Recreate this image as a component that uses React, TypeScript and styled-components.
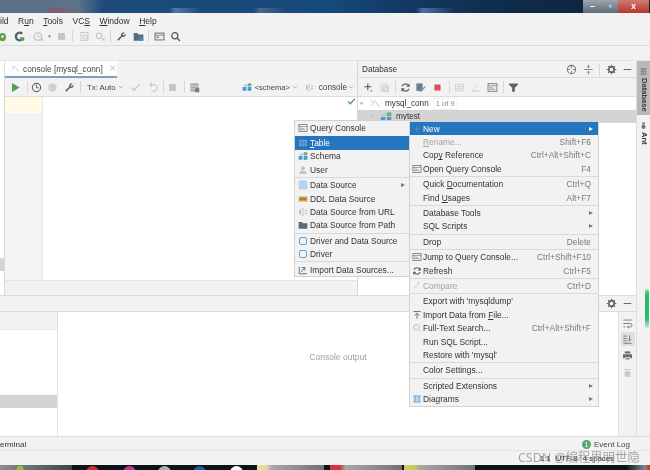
import React from 'react';
import styled, { createGlobalStyle } from 'styled-components';

const Global = createGlobalStyle`
  html, body { margin: 0; padding: 0; background: #f2f2f2; }
  body { font-family: "Liberation Sans", Arial, sans-serif; }
  u { text-underline-offset: 1px; text-decoration-thickness: 0.5px; }
  svg { flex: none; }
`;

const Screen = styled.div`
  position: relative; width: 650px; height: 470px; overflow: hidden;
  display: flex; flex-direction: column; background: #f2f2f2; color: #333;
  font-size: 8.4px; filter: blur(0.38px);
`;
const TitleStrip = styled.div`
  height: 13px; flex: none; display: flex; justify-content: flex-end; padding-right: 1px;
  background:
    linear-gradient(90deg, transparent 7%, rgba(170,60,70,.5) 8%, transparent 12%, transparent 26%, rgba(120,160,210,.55) 27%, transparent 31%, transparent 39%, rgba(130,130,150,.5) 40%, transparent 44%, transparent 64%, rgba(120,150,210,.6) 65%, transparent 70%) bottom / 100% 5px no-repeat,
    linear-gradient(90deg, #5b7088 0, #5d7389 12%, #1d4a78 16%, #174a7c 50%, #123a62 62%, #0f2a48 80%, #10233a 100%);
`;
const WinButton = styled.div<{ $w: number; $close?: boolean }>`
  width: ${p => p.$w}px; height: 13px; display: flex; align-items: center; justify-content: center;
  color: #fff; font-size: 9px; font-weight: 700; line-height: 1;
  background: ${p => p.$close ? 'linear-gradient(#cf7a70,#b8352c)' : 'linear-gradient(#9aa5ae,#5f6b76)'};
`;
const MenuBar = styled.div`
  height: 16px; flex: none; display: flex; align-items: center; font-size: 8.5px; color: #2f2f2f;
  span { margin-right: 9.5px; white-space: nowrap; }
`;
const ToolRow = styled.div<{ $h: number; $line?: boolean }>`
  height: ${p => p.$h}px; flex: none; display: flex; align-items: center; box-sizing: border-box;
  border-bottom: ${p => p.$line ? '1px solid #dcdcdc' : '0'};
`;
const MainTools = styled(ToolRow)`
  padding-bottom: 2px;
`;
const Slot = styled.div<{ $w?: number }>`
  width: ${p => p.$w ?? 16}px; flex: none; height: 100%; display: flex; align-items: center; justify-content: center;
`;
const Divider = styled.div<{ $mx?: number }>`
  width: 1px; height: 12px; flex: none; background: #d6d6d6; margin: 0 ${p => p.$mx ?? 2}px;
`;
const NavStrip = styled.div`
  height: 14px; flex: none;
`;
const Middle = styled.div`
  height: 377px; flex: none; display: flex; box-sizing: border-box; border-top: 1px solid #e4e4e4;
  border-bottom: 1px solid #dcdcdc;
`;
const Center = styled.div`
  width: 636px; flex: none; display: flex; flex-direction: column;
`;
const UpperSplit = styled.div`
  height: 234px; flex: none; display: flex; box-sizing: border-box;
`;
const EdgeStripe = styled.div`
  width: 5px; flex: none; background: #fff; box-sizing: border-box; border-right: 1px solid #dcdcdc;
  padding-top: 197px;
`;
const EdgeMark = styled.div`
  height: 13px; background: #d4d4d4;
`;
const EditorPane = styled.div`
  width: 352px; flex: none; display: flex; flex-direction: column;
`;
const TabRow = styled.div`
  height: 17px; flex: none; display: flex;
`;
const Tab = styled.div`
  width: 112px; background: #fff; display: flex; align-items: center; box-sizing: border-box;
  border-bottom: 2px solid #7b9cc4; padding-left: 5px; gap: 3px; font-size: 8.3px; color: #444; white-space: nowrap;
`;
const TabClose = styled.span`
  margin-left: 4px; color: #bdbdbd; font-size: 10px; line-height: 1;
`;
const Label = styled.span<{ $ml?: number; $fs: number }>`
  margin-left: ${p => p.$ml ?? 0}px; color: #444; white-space: nowrap; font-size: ${p => p.$fs}px;
`;
const Spacer = styled.div`
  flex: 1;
`;
const EditorBody = styled.div`
  flex: 1; display: flex; background: #fff; min-height: 0;
`;
const Gutter = styled.div`
  width: 38px; flex: none; background: #f3f3f3; box-sizing: border-box; border-right: 1px solid #e6e6e6;
`;
const CurrentLine = styled.div`
  height: 16px; background: #fffbe6;
`;
const EditorText = styled.div`
  flex: 1; display: flex; justify-content: flex-end; align-items: flex-start; padding: 0 1px 0 0;
`;
const EditorFoot = styled.div`
  height: 15px; flex: none; background: #f2f2f2; box-sizing: border-box; border-top: 1px solid #e4e4e4;
`;
const DbPane = styled.div`
  flex: 1; display: flex; flex-direction: column; background: #fff; box-sizing: border-box; border-left: 1px solid #d6d6d6;
`;
const PaneHead = styled(ToolRow)`
  background: #f2f2f2; font-size: 8.2px; padding: 1px 0 0 4px;
`;
const PaneTools = styled(ToolRow)`
  background: #f2f2f2; padding-left: 3px;
`;
const TreeRow = styled.div<{ $sel?: boolean; $indent: number }>`
  height: 13px; flex: none; display: flex; align-items: center; padding-left: ${p => p.$indent}px; gap: 4px;
  background: ${p => p.$sel ? '#d4d4d4' : 'transparent'}; font-size: 8.2px; color: #333;
`;
const Count = styled.span`
  padding: 0 2px; border: 1px solid #eeeeee; font-size: 7.6px; color: #888; line-height: 10px;
`;
const ConsoleHead = styled(ToolRow)`
  justify-content: flex-end; padding-right: 1px; border-top: 1px solid #dcdcdc; border-bottom: 1px solid #dcdcdc;
`;
const Lower = styled.div`
  flex: 1; display: flex; min-height: 0;
`;
const Sessions = styled.div`
  width: 58px; flex: none; display: flex; flex-direction: column; background: #fff; box-sizing: border-box;
  border-right: 1px solid #e0e0e0;
`;
const SessionHead = styled.div`
  height: 18px; flex: none; background: #f2f2f2; box-sizing: border-box; border-bottom: 1px solid #e6e6e6;
`;
const SessionSel = styled.div`
  height: 13px; flex: none; margin-top: 65px; background: #d4d4d4;
`;
const ConsoleOut = styled.div`
  flex: 1; display: flex; align-items: center; justify-content: center; background: #fff;
  color: #a0a0a0; font-size: 8.5px; padding-bottom: 35px;
`;
const SideTools = styled.div`
  width: 18px; flex: none; background: #f2f2f2; box-sizing: border-box; border-left: 1px solid #e0e0e0;
  display: flex; flex-direction: column; align-items: center; padding-top: 4px;
`;
const SideTool = styled.div<{ $on?: boolean }>`
  width: 14px; height: 14px; margin-bottom: 2.4px; display: flex; align-items: center; justify-content: center;
  border-radius: 1px; background: ${p => p.$on ? '#dfdfdf' : 'transparent'};
`;
const RightStripe = styled.div`
  flex: 1; display: flex; flex-direction: column; align-items: stretch; box-sizing: border-box; border-left: 1px solid #dedede;
`;
const StripeTab = styled.div<{ $on?: boolean; $h: number }>`
  height: ${p => p.$h}px; display: flex; flex-direction: column; align-items: center; padding-top: 6px; gap: 2px;
  box-sizing: border-box; background: ${p => p.$on ? '#b9b9b9' : 'transparent'};
`;
const Vertical = styled.span`
  writing-mode: vertical-rl; font-size: 7.6px; font-weight: 700; color: #3a3a3a; line-height: 10px;
`;
const GreenBar = styled.div`
  position: absolute; left: 645px; top: 289px; width: 4px; height: 39px; border-radius: 2px;
  background: linear-gradient(#9fdcb8, #27bb6c 15%, #27bb6c 75%, #bfead0);
`;
const StripeBar = styled(ToolRow)`
  justify-content: space-between; font-size: 8px; padding: 2px 20px 0 0; border-bottom: 1px solid #e4e4e4;
`;
const Terminal = styled.span`
  color: #333;
`;
const EventLog = styled.span`
  display: flex; align-items: center; gap: 3px; color: #444;
`;
const EventDot = styled.span`
  width: 9px; height: 9px; border-radius: 50%; background: #57a86f; color: #fff; font-size: 7px; line-height: 9px; text-align: center;
`;
const StatusBar = styled(ToolRow)`
  justify-content: flex-end; padding-right: 36px; gap: 5px; font-size: 7.8px; color: #333;
`;
const Taskbar = styled.div`
  flex: 1; background: #0d1118; display: flex; align-items: flex-start; overflow: hidden;
`;
const TaskStart = styled.div`
  width: 72px; height: 6px; flex: none;
  background: radial-gradient(circle at 20px 4px, #8fc04f 0 3px, transparent 4px), linear-gradient(90deg,#8b8f8d,#3d4446);
`;
const TaskDot = styled.div<{ $c: string; $ml: number }>`
  width: 13px; height: 13px; flex: none; border-radius: 50%; background: ${p => p.$c}; margin: 1px 0 0 ${p => p.$ml}px;
`;
const TaskItem = styled.div<{ $w: number; $ml: number; $c: string }>`
  width: ${p => p.$w}px; height: 6px; flex: none; margin-left: ${p => p.$ml}px;
  background: linear-gradient(90deg, ${p => p.$c} 0, ${p => p.$c} 14%, #a5aaa7 22%, #6e7371 100%);
`;
const Tray = styled.div`
  margin-left: auto; width: 24px; height: 6px; background: linear-gradient(90deg,#0d1118,#7d8b92 80%,#c33 95%);
`;
const Watermark = styled.div`
  position: absolute; left: 518px; top: 450px; font-size: 12.4px; color: rgba(120,120,120,.62); white-space: nowrap; line-height: 16px;
  font-family: "Noto Sans", "Noto Sans CJK SC", sans-serif;
`;
const PopMenu = styled.div<{ $x: number; $y: number; $w: number }>`
  position: absolute; left: ${p => p.$x}px; top: ${p => p.$y}px; width: ${p => p.$w}px; box-sizing: border-box;
  display: flex; flex-direction: column; background: #f2f2f2; box-shadow: 0 0 0 1px #d2d2d2;
  font-size: 8.4px; color: #333;
`;
const MenuRow = styled.div<{ $active?: boolean; $off?: boolean; $h: number }>`
  height: ${p => p.$h}px; flex: none; display: flex; align-items: center; white-space: nowrap; box-sizing: border-box;
  padding-right: 7px;
  background: ${p => p.$active ? '#2675bf' : 'transparent'};
  color: ${p => p.$active ? '#fff' : p.$off ? '#a3a3a3' : '#333'};
`;
const MenuIcon = styled.span<{ $w: number }>`
  width: ${p => p.$w}px; flex: none; display: flex; align-items: center; justify-content: center;
`;
const Shortcut = styled.span`
  margin-left: auto; color: #7a7a7a; font-size: 8.4px;
`;
const SubArrow = styled.span<{ $light?: boolean }>`
  margin-left: auto; margin-right: -2px; width: 0; height: 0; border-left: 4px solid ${p => p.$light ? '#fff' : '#777'};
  border-top: 2.5px solid transparent; border-bottom: 2.5px solid transparent;
`;
const MenuSep = styled.div<{ $clear?: boolean }>`
  height: 1px; flex: none; margin: 0.5px 0; background: ${p => p.$clear ? 'transparent' : '#d9d9d9'};
`;

const paths: Record<string, React.ReactNode> = {
  play: <path d="M3 1.5 14 8 3 14.5z" fill="#4c9e58" />,
  bug: <><ellipse cx="8" cy="9" rx="5" ry="6" fill="#5f9e4f" /><circle cx="8" cy="8" r="2" fill="#e8f0dc" /></>,
  cover: <><path d="M12 4a5.5 5.5 0 1 0 0 8" stroke="#55626c" strokeWidth="3.4" fill="none" /><path d="M9 9h6v5H9z" fill="#4fa04f" /></>,
  profile: <><circle cx="7" cy="8" r="5.5" stroke="#b8b8b8" strokeWidth="1.6" fill="none" /><path d="M7 5v3h3" stroke="#b8b8b8" fill="none" /><path d="M10 10h5v4h-5z" fill="#c8d8c8" /></>,
  drop: <path d="M5 6h6l-3 4z" fill="#777" />,
  dropLine: <path d="m4 6 4 4 4-4" stroke="#999" strokeWidth="1.300" fill="none" />,
  stopg: <rect x="3" y="3" width="10" height="10" fill="#c4c4c4" />,
  stopr: <rect x="2.5" y="2.5" width="11" height="11" rx="1" fill="#dc4f5c" />,
  docq: <><rect x="3" y="2" width="10" height="12" fill="none" stroke="#bcbcbc" /><circle cx="9" cy="9" r="3" fill="none" stroke="#b0b0b0" /></>,
  docq2: <><circle cx="6" cy="7" r="4" fill="none" stroke="#b8b8b8" strokeWidth="1.4" /><path d="M10 10h4v4h-4z" fill="#cfcfcf" /></>,
  wrench: <path d="M14 3.5 11 6.5 9.500 5 12.500 2A4 4 0 0 0 7.500 7L2 12.500 3.500 14 9 8.500A4 4 0 0 0 14 3.500z" fill="#56606a" />,
  folder: <><path d="M1 3h5l2 2h7v9H1z" fill="#5d6b78" /><path d="M9 9h6v5H9z" fill="#3f8ed4" /></>,
  term: <><rect x="1.500" y="3" width="13" height="10" fill="none" stroke="#56606a" strokeWidth="1.300" /><path d="M1.500 6h13" stroke="#56606a" /><path d="M4 8h3v2H4z" fill="#56606a" /></>,
  search: <><circle cx="7" cy="7" r="4.500" fill="none" stroke="#505a64" strokeWidth="1.800" /><path d="m10.500 10.500 4 4" stroke="#505a64" strokeWidth="2" /></>,
  consoleTab: <><path d="M3 3l3 4-3 3" stroke="#8fb2cc" fill="none" /><path d="M7 3l7 9" stroke="#9fc0a8" /></>,
  clock: <><circle cx="8" cy="8" r="6" fill="none" stroke="#5a6570" strokeWidth="1.600" /><path d="M8 4v4.500h3.500" stroke="#5a6570" strokeWidth="1.400" fill="none" /></>,
  disc: <circle cx="8" cy="8" r="6" fill="#cfcfcf" />,
  checkg: <path d="m2 8 4 4 8-9" stroke="#c6c6c6" strokeWidth="1.800" fill="none" />,
  undo: <path d="M4 4h6a3.500 3.500 0 0 1 0 9H6M4 4l3-2.500M4 4l3 3" stroke="#c4c4c4" strokeWidth="1.500" fill="none" />,
  grid: <><rect x="2" y="2" width="12" height="12" fill="#a8a8a8" /><path d="M2 6h12M2 10h12" stroke="#eee" /><path d="M9 9h6v6H9z" fill="#7b7b7b" /></>,
  schema: <><path d="M1 8h6v6H1zM9 8h6v6H9z" fill="#4a9ad4" /><path d="M9 2h6v5H9z" fill="#6fb26f" /><path d="M3 4h5v3H3z" fill="#a8cce6" /></>,
  url: <path d="M2 4h3v8H2zM7 2h2v3H7zM7 7h2v2H7zM7 11h2v3H7zM11 5h3v2h-3zM11 9h3v2h-3z" fill="#aebfca" />,
  console: <path d="M2 4h3v8H2zM7 2h2v3H7zM7 7h2v2H7zM7 11h2v3H7zM11 5h3v2h-3zM11 9h3v2h-3z" fill="#a9b8c4" />,
  globe: <><circle cx="8" cy="8" r="6" fill="none" stroke="#707a84" strokeWidth="1.500" /><path d="M8 2v4M8 10v4M2 8h4M10 8h4" stroke="#707a84" strokeWidth="1.300" /></>,
  split: <path d="M2 8h12M8 1v4M8 15v-4M6 3.500 8 5.500 10 3.500M6 12.500l2-2 2 2" stroke="#707a84" strokeWidth="1.300" fill="none" />,
  gear: <><circle cx="8" cy="8" r="4" fill="none" stroke="#5f6a74" strokeWidth="2.600" /><path d="M8 1v3M8 12v3M1 8h3M12 8h3M3 3l2 2M11 11l2 2M13 3l-2 2M3 13l2-2" stroke="#5f6a74" strokeWidth="1.600" /></>,
  minus: <path d="M2.500 8h11" stroke="#5f6a74" strokeWidth="1.500" />,
  plus: <><path d="M7 2v10M2 7h10" stroke="#4d5862" strokeWidth="1.600" /><path d="M10.500 12.500h3l-1.500 2z" fill="#4d5862" /></>,
  copy: <><rect x="3" y="3" width="8" height="9" fill="none" stroke="#c4c4c4" /><rect x="6" y="6" width="8" height="8" fill="#e0e0e0" stroke="#c4c4c4" /></>,
  refresh: <><path d="M13 6A5.500 5.500 0 0 0 3 6M3 10a5.500 5.500 0 0 0 10 0" stroke="#56606a" strokeWidth="1.800" fill="none" /><path d="M14 2v5H9zM2 14V9h5z" fill="#56606a" /></>,
  editdb: <><rect x="2" y="2" width="9" height="11" fill="#727d88" /><path d="m7 13 7-7 1.500 1.500-7 7H7z" fill="#4e9fd6" /></>,
  tableg: <><rect x="2" y="3" width="12" height="10" fill="none" stroke="#c8c8c8" /><path d="M2 6.500h12M2 9.500h12M6 3v10M10 3v10" stroke="#d2d2d2" /></>,
  pencil: <path d="M2 13h12M4 11l7-7" stroke="#c4c4c4" strokeWidth="1.300" fill="none" />,
  ql: <><rect x="1.500" y="2.500" width="13" height="11" fill="none" stroke="#67717b" strokeWidth="1.200" /><path d="M1.500 5.500h13" stroke="#67717b" /><path d="M4 8h3v3H4zM9 8v3h3" fill="none" stroke="#67717b" strokeWidth=".8" /></>,
  filter: <path d="M1.500 2h13v2L10 8.500V14H6V8.500L1.500 4z" fill="#5b6670" />,
  checkOk: <path d="m2 8 4 4 8-9" stroke="#4ea34f" strokeWidth="2.400" fill="none" />,
  treeDown: <path d="M3 5h10l-5 7z" fill="#bcbcbc" />,
  treeRight: <path d="M5 3v10l7-5z" fill="#c4c4c4" />,
  dbIcon: <rect x="2" y="1.500" width="12" height="13" rx="1.500" fill="#b5d6f0" stroke="#9cc4e4" />,
  tableMenu: <><rect x="2" y="3" width="12" height="10" fill="#7fa9d0" /><path d="M2 6.500h12M2 9.500h12M6 3v10M10 3v10" stroke="#2675bf" /></>,
  user: <><circle cx="8" cy="5" r="3" fill="#bdbdbd" /><path d="M2 14c0-4 3-5 6-5s6 1 6 5z" fill="#bdbdbd" /></>,
  ddl: <><rect x="1" y="4" width="14" height="8" rx="1" fill="#d6a24e" /><path d="M3 7h10M3 9h10" stroke="#8a5a1c" strokeWidth=".9" /></>,
  pathf: <path d="M1 3h5l2 2h7v9H1z" fill="#5f6973" />,
  driver: <rect x="2.500" y="2.500" width="11" height="11" rx="2" fill="#eef6fc" stroke="#4f9fdd" strokeWidth="1.600" />,
  importd: <><path d="M2 3v11h12" stroke="#5f6973" strokeWidth="1.500" fill="none" /><path d="M5 11l6-7M11 9V4H6" stroke="#5f6973" strokeWidth="1.500" fill="none" /></>,
  compare: <path d="M3 12 8 7M8 3h2v2h2" stroke="#c4c4c4" strokeWidth="1.400" fill="none" />,
  importf: <path d="M2 2.500h12M8 14V6M4 9l4-4 4 4" stroke="#5f6973" strokeWidth="1.500" fill="none" />,
  fsearch: <><circle cx="7" cy="7" r="4.500" fill="none" stroke="#b4b4b4" strokeWidth="1.300" /><path d="m10.500 10.500 3.500 3.500" stroke="#b4b4b4" strokeWidth="1.300" /></>,
  diagram: <><rect x="2" y="3" width="12" height="10" fill="#b9d9ef" /><path d="M5 3v10M11 3v10M2 3h12M2 13h12" stroke="#4f8fc4" strokeWidth="1" /></>,
  newArrow: <path d="M8 3v10M3 8h10" stroke="#5a8fc4" strokeWidth="1.400" />,
  wrap: <path d="M2 3h12M2 8h10a2.500 2.500 0 0 1 0 5H8M2 13h3M8 13l2-2M8 13l2 2" stroke="#5f6a74" strokeWidth="1.200" fill="none" />,
  scroll: <path d="M2 13.500h12M2 3h5M2 6.500h5M2 10h5M11 2v8M9 8l2 2 2-2" stroke="#5f6a74" strokeWidth="1.200" fill="none" />,
  print: <><path d="M4 2h8v3H4z" fill="#5f6a74" /><path d="M1.500 6h13v6H12v-2H4v2H1.500z" fill="#5f6a74" /><path d="M5 11h6v3H5z" fill="#8d959d" /></>,
  trash: <path d="M3 3h10v1.500H3zM4 6h8v8H4z" fill="#c8c8c8" />,
  dbStripe: <><rect x="3" y="2" width="10" height="12" fill="#8b8b8b" /><path d="M3 6h10M3 10h10" stroke="#bbb" /></>,
  ant: <><ellipse cx="8" cy="4" rx="2.500" ry="2" fill="#6b7680" /><ellipse cx="8" cy="10" rx="3.500" ry="4" fill="#6b7680" /></>,
};

const Icon = ({ k, s = 11 }: { k: string; s?: number }) => (
  <svg width={s} height={s} viewBox="0 0 16 16">{paths[k]}</svg>
);

type Item = { l?: React.ReactNode; i?: string; sc?: string; sub?: boolean; on?: boolean; off?: boolean; sep?: boolean; clear?: boolean };

const leftItems: Item[] = [
  { l: 'Query Console', i: 'ql' }, { sep: true, clear: true },
  { l: <><u>T</u>able</>, i: 'tableMenu', on: true }, { l: 'Schema', i: 'schema' }, { l: 'User', i: 'user' }, { sep: true },
  { l: 'Data Source', i: 'dbIcon', sub: true }, { l: 'DDL Data Source', i: 'ddl' }, { l: 'Data Source from URL', i: 'url' }, { l: 'Data Source from Path', i: 'pathf' }, { sep: true },
  { l: 'Driver and Data Source', i: 'driver' }, { l: 'Driver', i: 'driver' }, { sep: true },
  { l: 'Import Data Sources...', i: 'importd' },
];

const mainItems: Item[] = [
  { l: 'New', i: 'newArrow', sub: true, on: true },
  { l: <><u>R</u>ename...</>, sc: 'Shift+F6', off: true },
  { l: <>Cop<u>y</u> Reference</>, sc: 'Ctrl+Alt+Shift+C' },
  { l: 'Open Query Console', i: 'ql', sc: 'F4' }, { sep: true },
  { l: <>Quick <u>D</u>ocumentation</>, sc: 'Ctrl+Q' },
  { l: <>Find <u>U</u>sages</>, sc: 'Alt+F7' }, { sep: true },
  { l: 'Database Tools', sub: true }, { l: 'SQL Scripts', sub: true }, { sep: true },
  { l: 'Drop', sc: 'Delete' }, { sep: true },
  { l: 'Jump to Query Console...', i: 'ql', sc: 'Ctrl+Shift+F10' },
  { l: 'Refresh', i: 'refresh', sc: 'Ctrl+F5' }, { sep: true },
  { l: 'Compare', i: 'compare', sc: 'Ctrl+D', off: true }, { sep: true },
  { l: "Export with 'mysqldump'" },
  { l: <>Import Data from <u>F</u>ile...</>, i: 'importf' },
  { l: 'Full-Text Search...', i: 'fsearch', sc: 'Ctrl+Alt+Shift+F' },
  { l: 'Run SQL Script...' },
  { l: "Restore with 'mysql'" }, { sep: true },
  { l: 'Color Settings...' }, { sep: true },
  { l: 'Scripted Extensions', sub: true },
  { l: 'Diagrams', i: 'diagram', sub: true },
];

const Menu = ({ items, x, y, w, pad, h }: { items: Item[]; x: number; y: number; w: number; pad: number; h: number }) => (
  <PopMenu $x={x} $y={y} $w={w}>
    {items.map((it, n) =>
      it.sep ? <MenuSep key={n} $clear={it.clear} /> : (
        <MenuRow key={n} $active={it.on} $off={it.off} $h={h}>
          <MenuIcon $w={pad}>{it.i && <Icon k={it.i} s={10} />}</MenuIcon>
          <span>{it.l}</span>
          {it.sc && <Shortcut>{it.sc}</Shortcut>}
          {it.sub && <SubArrow $light={it.on} />}
        </MenuRow>
      ))}
  </PopMenu>
);

export default function App() {
  return (
    <Screen>
      <Global />
      <TitleStrip>
        <WinButton $w={19}>–</WinButton>
        <WinButton $w={16}>▫</WinButton>
        <WinButton $w={31} $close>x</WinButton>
      </TitleStrip>
      <MenuBar>
        <span>ild</span><span>R<u>u</u>n</span><span><u>T</u>ools</span><span>VC<u>S</u></span><span><u>W</u>indow</span><span><u>H</u>elp</span>
      </MenuBar>
      <MainTools $h={17} $line>
        <Slot $w={5}><Icon k="bug" /></Slot>
        <Slot $w={28}><Icon k="cover" /></Slot>
        <Slot $w={10}><Icon k="profile" /></Slot>
        <Slot $w={12}><Icon k="drop" s={9} /></Slot>
        <Slot $w={12}><Icon k="stopg" /></Slot>
        <Divider $mx={5} />
        <Slot $w={12}><Icon k="docq" /></Slot>
        <Slot $w={20}><Icon k="docq2" /></Slot>
        <Divider $mx={0} />
        <Slot $w={20}><Icon k="wrench" /></Slot>
        <Slot $w={14}><Icon k="folder" /></Slot>
        <Divider $mx={3} />
        <Slot $w={14}><Icon k="term" /></Slot>
        <Slot $w={18}><Icon k="search" /></Slot>
      </MainTools>
      <NavStrip />
      <Middle>
        <Center>
          <UpperSplit>
            <EdgeStripe><EdgeMark /></EdgeStripe>
            <EditorPane>
              <TabRow>
                <Tab><Icon k="consoleTab" s={10} /><span>console [mysql_conn]</span><TabClose>×</TabClose></Tab>
              </TabRow>
              <ToolRow $h={19} $line>
                <Slot $w={20}><Icon k="play" /></Slot>
                <Divider $mx={1.5} />
                <Slot $w={14}><Icon k="clock" /></Slot>
                <Slot $w={18}><Icon k="disc" /></Slot>
                <Slot $w={16}><Icon k="wrench" /></Slot>
                <Divider $mx={3} />
                <Label $ml={3} $fs={7.8}>Tx: Auto</Label>
                <Slot $w={10}><Icon k="dropLine" s={8} /></Slot>
                <Slot $w={20}><Icon k="checkg" /></Slot>
                <Slot $w={14}><Icon k="undo" /></Slot>
                <Divider $mx={3} />
                <Slot $w={12}><Icon k="stopg" /></Slot>
                <Divider $mx={5} />
                <Slot $w={10}><Icon k="grid" /></Slot>
                <Spacer />
                <Icon k="schema" s={10} />
                <Label $ml={3} $fs={7.5}>&lt;schema&gt;</Label>
                <Slot $w={10}><Icon k="dropLine" s={8} /></Slot>
                <Slot $w={19}><Icon k="console" s={9} /></Slot>
                <Label $fs={8.2}>console</Label>
                <Slot $w={8}><Icon k="dropLine" s={8} /></Slot>
                <Slot $w={2} />
              </ToolRow>
              <EditorBody>
                <Gutter><CurrentLine /></Gutter>
                <EditorText><Icon k="checkOk" s={9} /></EditorText>
              </EditorBody>
              <EditorFoot />
            </EditorPane>
            <DbPane>
              <PaneHead $h={17} $line>
                <span>Database</span>
                <Spacer />
                <Slot $w={18}><Icon k="globe" /></Slot>
                <Slot $w={16}><Icon k="split" /></Slot>
                <Divider $mx={2.5} />
                <Slot $w={18}><Icon k="gear" /></Slot>
                <Slot $w={15}><Icon k="minus" /></Slot>
                <Slot $w={1} />
              </PaneHead>
              <PaneTools $h={19} $line>
                <Slot $w={14}><Icon k="plus" /></Slot>
                <Slot $w={18}><Icon k="copy" /></Slot>
                <Divider $mx={2} />
                <Slot $w={14}><Icon k="refresh" /></Slot>
                <Slot $w={17}><Icon k="editdb" /></Slot>
                <Slot $w={17}><Icon k="stopr" s={9} /></Slot>
                <Divider $mx={3} />
                <Slot $w={12}><Icon k="tableg" /></Slot>
                <Slot $w={20}><Icon k="pencil" /></Slot>
                <Slot $w={14}><Icon k="ql" /></Slot>
                <Divider $mx={4} />
                <Slot $w={10}><Icon k="filter" /></Slot>
              </PaneTools>
              <TreeRow $indent={0}>
                <Slot $w={7}><Icon k="treeDown" s={7} /></Slot>
                <Icon k="consoleTab" s={12} />
                <span>mysql_conn</span>
                <Count>1 of 9</Count>
              </TreeRow>
              <TreeRow $sel $indent={11}>
                <Icon k="treeRight" s={7} />
                <Icon k="schema" s={12} />
                <span>mytest</span>
              </TreeRow>
            </DbPane>
          </UpperSplit>
          <ConsoleHead $h={17}>
            <Slot $w={16}><Icon k="gear" /></Slot>
            <Slot $w={16}><Icon k="minus" /></Slot>
          </ConsoleHead>
          <Lower>
            <Sessions><SessionHead /><SessionSel /></Sessions>
            <ConsoleOut>Console output</ConsoleOut>
            <SideTools>
              <SideTool><Icon k="wrap" /></SideTool>
              <SideTool $on><Icon k="scroll" /></SideTool>
              <SideTool><Icon k="print" /></SideTool>
              <SideTool><Icon k="trash" /></SideTool>
            </SideTools>
          </Lower>
        </Center>
        <RightStripe>
          <StripeTab $on $h={54}><Icon k="dbStripe" s={9} /><Vertical>Database</Vertical></StripeTab>
          <StripeTab $h={34}><Icon k="ant" s={9} /><Vertical>Ant</Vertical></StripeTab>
        </RightStripe>
      </Middle>
      <StripeBar $h={14}>
        <Terminal>erminal</Terminal>
        <EventLog><EventDot>1</EventDot>Event Log</EventLog>
      </StripeBar>
      <StatusBar $h={14}>
        <span>1:1</span><span>UTF-8</span><span>4 spaces</span>
      </StatusBar>
      <Taskbar>
        <TaskStart />
        <TaskDot $c="#c0392b" $ml={14} />
        <TaskDot $c="#b83b8e" $ml={24} />
        <TaskDot $c="#aab0b5" $ml={22} />
        <TaskDot $c="#1f5c9e" $ml={22} />
        <TaskDot $c="#ffffff" $ml={24} />
        <TaskItem $w={67} $ml={14} $c="#e8dc9c" />
        <TaskItem $w={72} $ml={6} $c="#d8343f" />
        <TaskItem $w={71} $ml={2} $c="#c9d05a" />
        <Tray />
      </Taskbar>
      <GreenBar />
      <Menu items={leftItems} x={295} y={121} w={115} pad={15} h={13.4} />
      <Menu items={mainItems} x={410} y={122} w={188} pad={13} h={13.4} />
      <Watermark>CSDN @编程界明世隐</Watermark>
    </Screen>
  );
}
